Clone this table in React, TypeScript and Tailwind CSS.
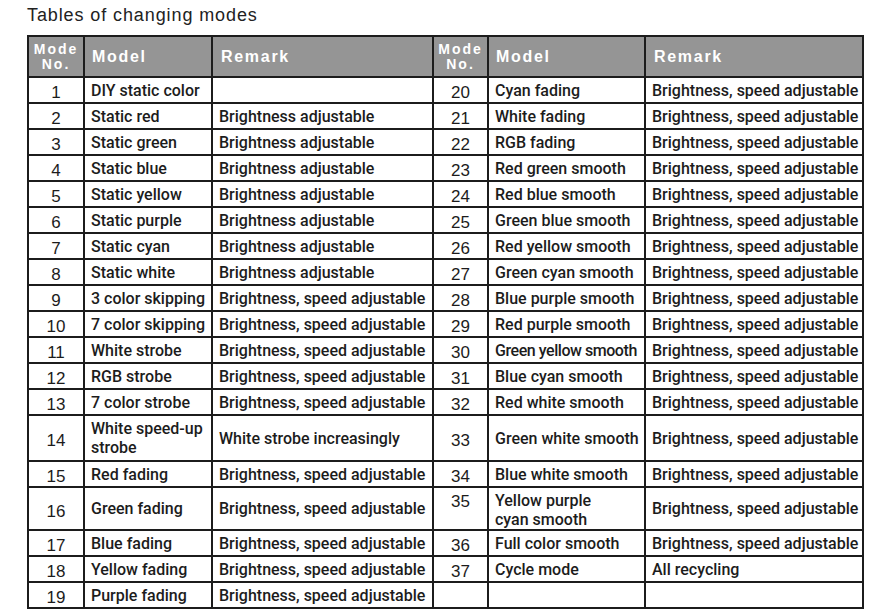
type Cell = { no: string; model: string[]; remark: string; top?: boolean; tight?: boolean }
type Row = { h: string; left: Cell; right: Cell | null }

const BSA = "Brightness, speed adjustable"
const BA = "Brightness adjustable"

const rows: Row[] = [
  { h: "h-[26px]", left: { no: "1", model: ["DIY static color"], remark: "" }, right: { no: "20", model: ["Cyan fading"], remark: BSA } },
  { h: "h-[26px]", left: { no: "2", model: ["Static red"], remark: BA }, right: { no: "21", model: ["White fading"], remark: BSA } },
  { h: "h-[26px]", left: { no: "3", model: ["Static green"], remark: BA }, right: { no: "22", model: ["RGB fading"], remark: BSA } },
  { h: "h-[26px]", left: { no: "4", model: ["Static blue"], remark: BA }, right: { no: "23", model: ["Red green smooth"], remark: BSA } },
  { h: "h-[26px]", left: { no: "5", model: ["Static yellow"], remark: BA }, right: { no: "24", model: ["Red blue smooth"], remark: BSA } },
  { h: "h-[26px]", left: { no: "6", model: ["Static purple"], remark: BA }, right: { no: "25", model: ["Green blue smooth"], remark: BSA } },
  { h: "h-[26px]", left: { no: "7", model: ["Static cyan"], remark: BA }, right: { no: "26", model: ["Red yellow smooth"], remark: BSA } },
  { h: "h-[26px]", left: { no: "8", model: ["Static white"], remark: BA }, right: { no: "27", model: ["Green cyan smooth"], remark: BSA } },
  { h: "h-[26px]", left: { no: "9", model: ["3 color skipping"], remark: BSA }, right: { no: "28", model: ["Blue purple smooth"], remark: BSA } },
  { h: "h-[26px]", left: { no: "10", model: ["7 color skipping"], remark: BSA }, right: { no: "29", model: ["Red purple smooth"], remark: BSA } },
  { h: "h-[26px]", left: { no: "11", model: ["White strobe"], remark: BSA }, right: { no: "30", model: ["Green yellow smooth"], remark: BSA, tight: true } },
  { h: "h-[26px]", left: { no: "12", model: ["RGB strobe"], remark: BSA }, right: { no: "31", model: ["Blue cyan smooth"], remark: BSA } },
  { h: "h-[26px]", left: { no: "13", model: ["7 color strobe"], remark: BSA }, right: { no: "32", model: ["Red white smooth"], remark: BSA } },
  { h: "h-[46px]", left: { no: "14", model: ["White speed-up", "strobe"], remark: "White strobe increasingly" }, right: { no: "33", model: ["Green white smooth"], remark: BSA } },
  { h: "h-[26px]", left: { no: "15", model: ["Red fading"], remark: BSA }, right: { no: "34", model: ["Blue white smooth"], remark: BSA } },
  { h: "h-[40px]", left: { no: "16", model: ["Green fading"], remark: BSA }, right: { no: "35", model: ["Yellow purple", "cyan smooth"], remark: BSA, top: true } },
  { h: "h-[26px]", left: { no: "17", model: ["Blue fading"], remark: BSA }, right: { no: "36", model: ["Full color smooth"], remark: BSA } },
  { h: "h-[26px]", left: { no: "18", model: ["Yellow fading"], remark: BSA }, right: { no: "37", model: ["Cycle mode"], remark: "All recycling" } },
  { h: "h-[25px]", left: { no: "19", model: ["Purple fading"], remark: BSA }, right: null },
]

const td = "border-2 border-[#1c1c1c] p-0"

function Cells({ c }: { c: Cell | null }) {
  if (!c) {
    return (
      <>
        <td className={td} />
        <td className={td} />
        <td className={td} />
      </>
    )
  }
  return (
    <>
      <td className={`${td} text-center font-['Liberation_Sans',Arial,sans-serif] text-[17px] ${c.top ? "align-top pt-[4px]" : "align-middle pt-[5px]"}`}>
        {c.no}
      </td>
      <td
        className={`${td} pl-[6px] whitespace-nowrap ${c.tight ? "tracking-[-0.45px]" : ""} ${c.top ? "align-top pt-[3px]" : "align-middle"}`}
      >
        {c.model.map((m) => (
          <div key={m}>{m}</div>
        ))}
      </td>
      <td className={`${td} pl-[6px] whitespace-nowrap align-middle`}>{c.remark}</td>
    </>
  )
}

function Head() {
  return (
    <>
      <th className={`${td} bg-[#959595] text-center text-[14px] leading-[15px] tracking-[2px] font-bold`}>
        <div>Mode</div>
        <div>No.</div>
      </th>
      <th className={`${td} bg-[#959595] pl-[7px] text-left text-[16px] tracking-[1.7px] font-bold`}>Model</th>
      <th className={`${td} bg-[#959595] pl-[8px] text-left text-[16px] tracking-[1.7px] font-bold`}>Remark</th>
    </>
  )
}

export default function App() {
  return (
    <div className="w-[875px] h-[616px] bg-white pl-[27px] pt-[4px] text-[#1c1c1c]">
      <h1 className="font-['Liberation_Sans',Arial,sans-serif] text-[18px] leading-[22px] tracking-[0.9px] text-[#222]">
        Tables of changing modes
      </h1>
      <table className="mt-[9px] table-fixed border-collapse border-2 border-[#1c1c1c] w-[835px] font-['Roboto',Arial,sans-serif] font-medium text-[16px] leading-[19px]">
        <colgroup>
          <col className="w-[56px]" />
          <col className="w-[128px]" />
          <col className="w-[221px]" />
          <col className="w-[55px]" />
          <col className="w-[157px]" />
          <col className="w-[218px]" />
        </colgroup>
        <thead>
          <tr className="h-[41px] text-white font-['Liberation_Sans',Arial,sans-serif]">
            <Head />
            <Head />
          </tr>
        </thead>
        <tbody>
          {rows.map((r) => (
            <tr key={r.left.no} className={r.h}>
              <Cells c={r.left} />
              <Cells c={r.right} />
            </tr>
          ))}
        </tbody>
      </table>
    </div>
  )
}
